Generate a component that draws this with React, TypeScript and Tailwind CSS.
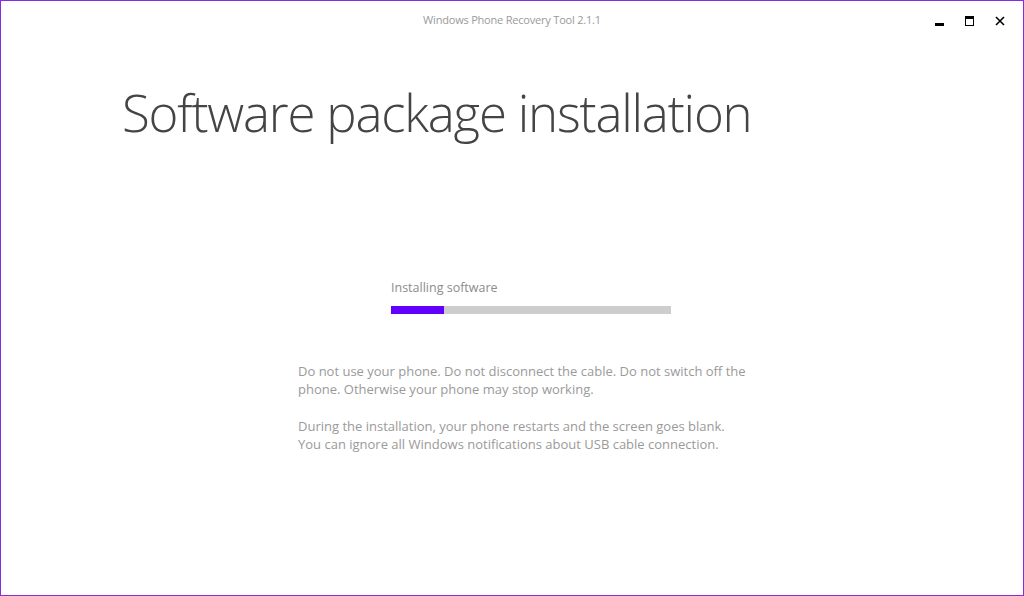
import React from "react";

function WindowControls() {
  return (
    <div className="flex items-center justify-end gap-[19px] pr-[17px] pt-[14px]">
      <button type="button" className="grid h-[12px] w-[12px] place-items-end">
        <span className="mb-[1px] block h-[3px] w-[9px] bg-black" />
      </button>
      <button type="button" className="grid h-[12px] w-[12px] place-items-center">
        <span className="block h-[10px] w-[9px] border border-t-[3px] border-black" />
      </button>
      <button type="button" className="grid h-[12px] w-[12px] place-items-center">
        <svg width="10" height="10" viewBox="0 0 10 10">
          <path d="M1 1 L9 9 M9 1 L1 9" stroke="#000" strokeWidth="1.6" />
        </svg>
      </button>
    </div>
  );
}

export default function App() {
  const progress = 19;
  return (
    <div
      className="relative h-[596px] w-[1024px] overflow-hidden border border-[#8a2be2] bg-white text-[#999]"
      style={{ fontFamily: '"Open Sans", "Noto Sans", sans-serif' }}
    >
      <div className="grid h-[40px] grid-cols-[1fr_auto_1fr] items-start">
        <div />
        <p className="pt-[11px] text-[11px] tracking-[-0.2px] text-[#9a9a9a]">Windows Phone Recovery Tool 2.1.1</p>
        <WindowControls />
      </div>

      <h1 className="ml-[121px] mt-[39px] text-[51px] leading-[64px] font-light tracking-[-1.2px] text-[#444]">
        Software package installation
      </h1>

      <div className="ml-[390px] mt-[135px] w-[280px]">
        <p className="text-[12.5px] leading-[18px] text-[#8c8c8c]">Installing software</p>
        <div className="mt-[9px] h-[8px] w-[280px] bg-[#cdcdcd]">
          <div className="h-full bg-[#6200ff]" style={{ width: `${progress}%` }} />
        </div>
      </div>

      <div className="ml-[297px] mt-[48px] w-[470px] text-[13px] leading-[18px] text-[#9a9a9a]">
        <p>
          Do not use your phone. Do not disconnect the cable. Do not switch off the
          <br />
          phone. Otherwise your phone may stop working.
        </p>
        <p className="mt-[19px]">
          During the installation, your phone restarts and the screen goes blank.
          <br />
          You can ignore all Windows notifications about USB cable connection.
        </p>
      </div>
    </div>
  );
}
